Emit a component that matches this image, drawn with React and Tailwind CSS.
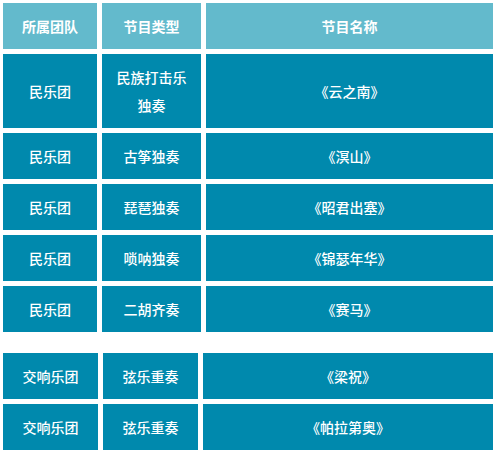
import React from "react";

const folkRows = [
  { team: "民乐团", type: ["民族打击乐", "独奏"], name: "《云之南》", tall: true },
  { team: "民乐团", type: ["古筝独奏"], name: "《溟山》" },
  { team: "民乐团", type: ["琵琶独奏"], name: "《昭君出塞》" },
  { team: "民乐团", type: ["唢呐独奏"], name: "《锦瑟年华》" },
  { team: "民乐团", type: ["二胡齐奏"], name: "《赛马》" },
];

const orchestraRows = [
  { team: "交响乐团", type: ["弦乐重奏"], name: "《梁祝》" },
  { team: "交响乐团", type: ["弦乐重奏"], name: "《帕拉第奥》" },
];

const Cell = ({ children, className = "" }) => (
  <div
    className={`flex flex-col items-center justify-center text-center text-white text-[14px] leading-[28px] ${className}`}
  >
    {children}
  </div>
);

const App = () => {
  return (
    <div
      className="w-[497px] h-[453px] bg-white px-[3px] pt-[3px]"
      style={{ fontFamily: '"Noto Sans CJK SC", "Noto Sans", sans-serif' }}
    >
      {/* 民乐团 */}
      <div className="grid grid-cols-[94px_99px_287px] gap-[5px]">
        <Cell className="h-[46px] bg-[#63bacc] font-bold">所属团队</Cell>
        <Cell className="h-[46px] bg-[#63bacc] font-bold">节目类型</Cell>
        <Cell className="h-[46px] bg-[#63bacc] font-bold">节目名称</Cell>
        {folkRows.map((row, i) => (
          <React.Fragment key={i}>
            <Cell className={`${row.tall ? "h-[74px]" : "h-[46px]"} bg-[#0089ad] font-medium`}>
              {row.team}
            </Cell>
            <Cell className={`${row.tall ? "h-[74px]" : "h-[46px]"} bg-[#0089ad] font-medium`}>
              {row.type.map((t) => (
                <span key={t}>{t}</span>
              ))}
            </Cell>
            <Cell className={`${row.tall ? "h-[74px]" : "h-[46px]"} bg-[#0089ad] font-medium`}>
              {row.name}
            </Cell>
          </React.Fragment>
        ))}
      </div>

      {/* 交响乐团 */}
      <div className="grid grid-cols-[95px_95px_290px] gap-[5px] mt-[21px]">
        {orchestraRows.map((row, i) => (
          <React.Fragment key={i}>
            <Cell className="h-[46px] bg-[#0089ad] font-medium">{row.team}</Cell>
            <Cell className="h-[46px] bg-[#0089ad] font-medium">{row.type[0]}</Cell>
            <Cell className="h-[46px] bg-[#0089ad] font-medium">{row.name}</Cell>
          </React.Fragment>
        ))}
      </div>
    </div>
  );
};

export default App;
